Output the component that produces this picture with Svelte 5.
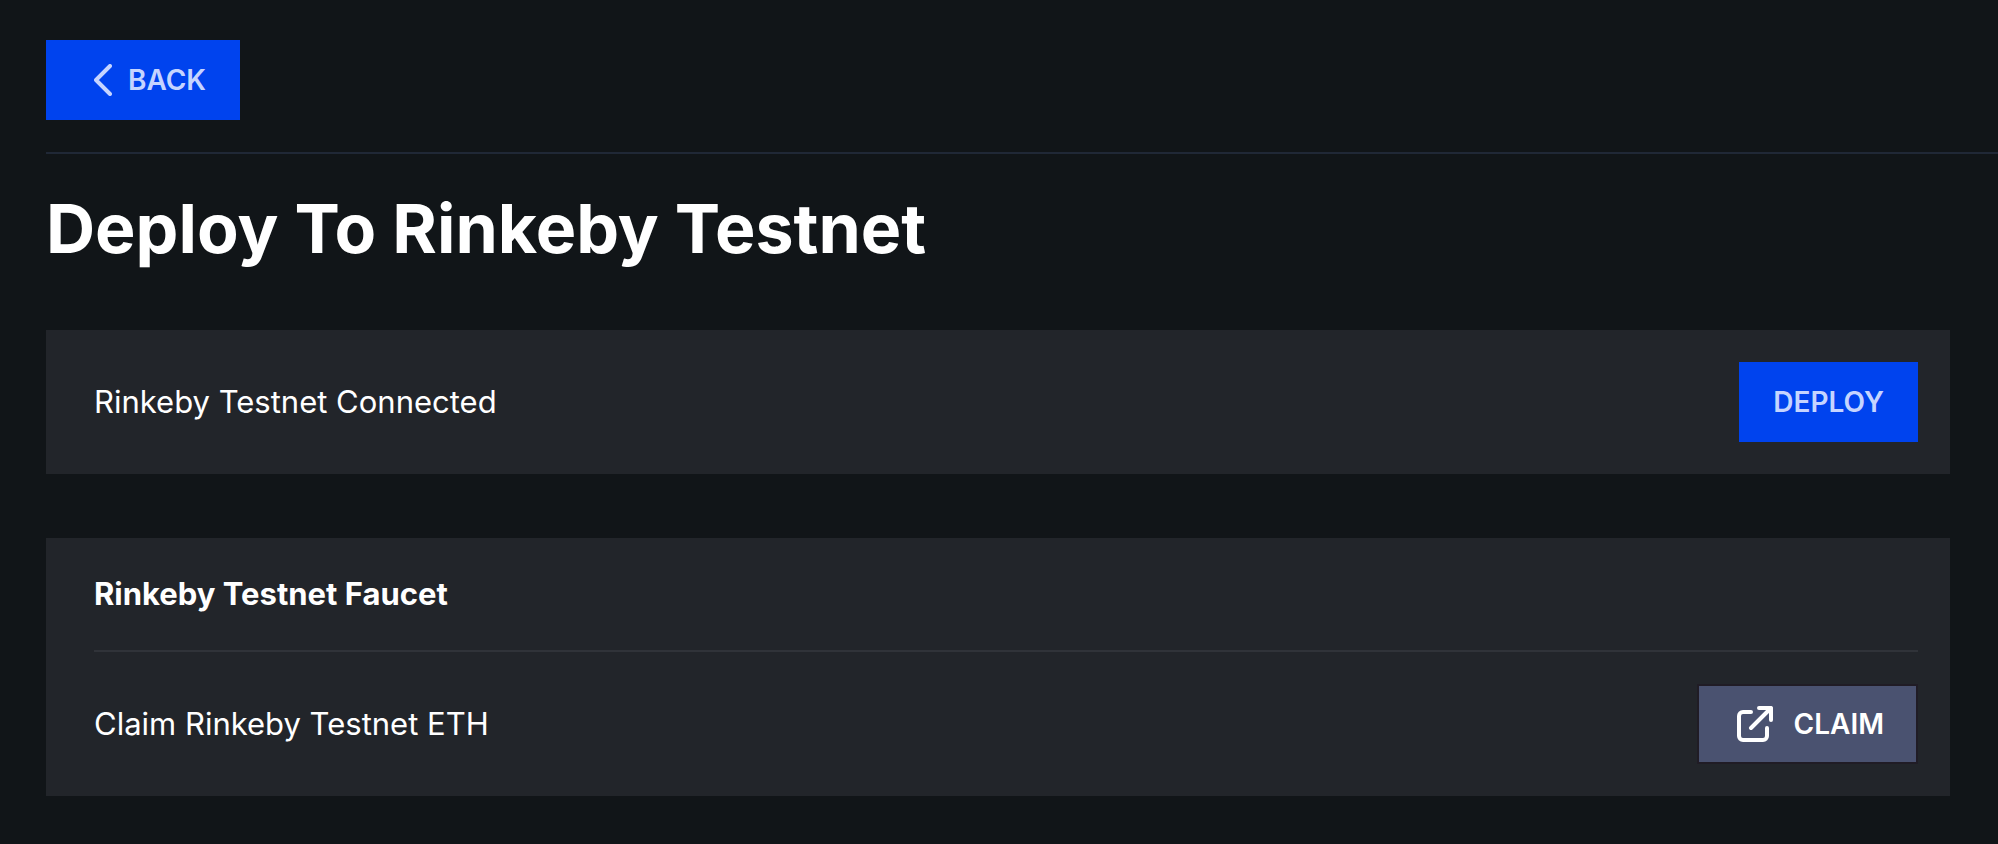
<script>
  let { onback = () => {}, ondeploy = () => {} } = $props();
</script>

<div class="page">
  <header>
    <button class="btn primary back" type="button" onclick={onback}>
      <svg width="18" height="32" viewBox="0 0 18 32" aria-hidden="true">
        <path d="M16 2 2 16l14 14" fill="none" stroke="currentColor" stroke-width="4" stroke-linecap="round" stroke-linejoin="round" />
      </svg>
      BACK
    </button>
  </header>

  <main>
    <h1>Deploy To Rinkeby Testnet</h1>

    <section class="card">
      <div class="row">
        <p>Rinkeby Testnet Connected</p>
        <button class="btn primary" type="button" onclick={ondeploy}>DEPLOY</button>
      </div>
    </section>

    <section class="card">
      <h2>Rinkeby Testnet Faucet</h2>
      <div class="row claim-row">
        <p>Claim Rinkeby Testnet ETH</p>
        <a class="btn secondary" href="#faucet">
          <svg width="36" height="36" viewBox="0 0 36 36" fill="none" stroke="currentColor" stroke-width="4" stroke-linecap="round" stroke-linejoin="round" aria-hidden="true">
            <path d="M14 6H6a4 4 0 0 0-4 4v20a4 4 0 0 0 4 4h20a4 4 0 0 0 4-4v-8" />
            <path d="M22 2h12v12M34 2 14 22" />
          </svg>
          CLAIM
        </a>
      </div>
    </section>
  </main>
</div>

<style>
  :global(body) {
    margin: 0;
    background: #111518;
  }

  .page {
    box-sizing: border-box;
    padding: 40px 0 48px 46px;
    color: #fff;
    font-family: Inter, "Liberation Sans", sans-serif;
    font-size: 31px;
    line-height: 48px;
  }

  header {
    padding-bottom: 32px;
    border-bottom: 2px solid #202836;
  }

  main {
    padding-right: 48px;
  }

  h1 {
    margin: 34px 0 62px;
    font-size: 68px;
    line-height: 80px;
    font-weight: 700;
  }

  h2 {
    margin: 0;
    padding-bottom: 32px;
    border-bottom: 2px solid #303339;
    font-size: 31px;
    line-height: 48px;
    font-weight: 700;
  }

  p {
    margin: 0;
  }

  .card {
    padding: 32px 32px 32px 48px;
    background: #22252a;
  }

  .card + .card {
    margin-top: 64px;
  }

  .row {
    display: flex;
    align-items: center;
    justify-content: space-between;
    gap: 32px;
  }

  .claim-row {
    padding-top: 32px;
  }

  .btn {
    box-sizing: border-box;
    display: inline-flex;
    align-items: center;
    height: 80px;
    padding: 0 32px;
    border: 2px solid transparent;
    font: 600 28px/40px Inter, "Liberation Sans", sans-serif;
    text-decoration: none;
    cursor: pointer;
  }

  .primary {
    border-color: #0043ee;
    background: #0043ee;
    color: #c5d4ff;
  }

  .back {
    display: flex;
    gap: 16px;
    padding-left: 46px;
  }

  .secondary {
    gap: 21px;
    padding: 0 32px 0 38px;
    border-color: #201c25;
    background: #4a5270;
    color: #fff;
  }
</style>
